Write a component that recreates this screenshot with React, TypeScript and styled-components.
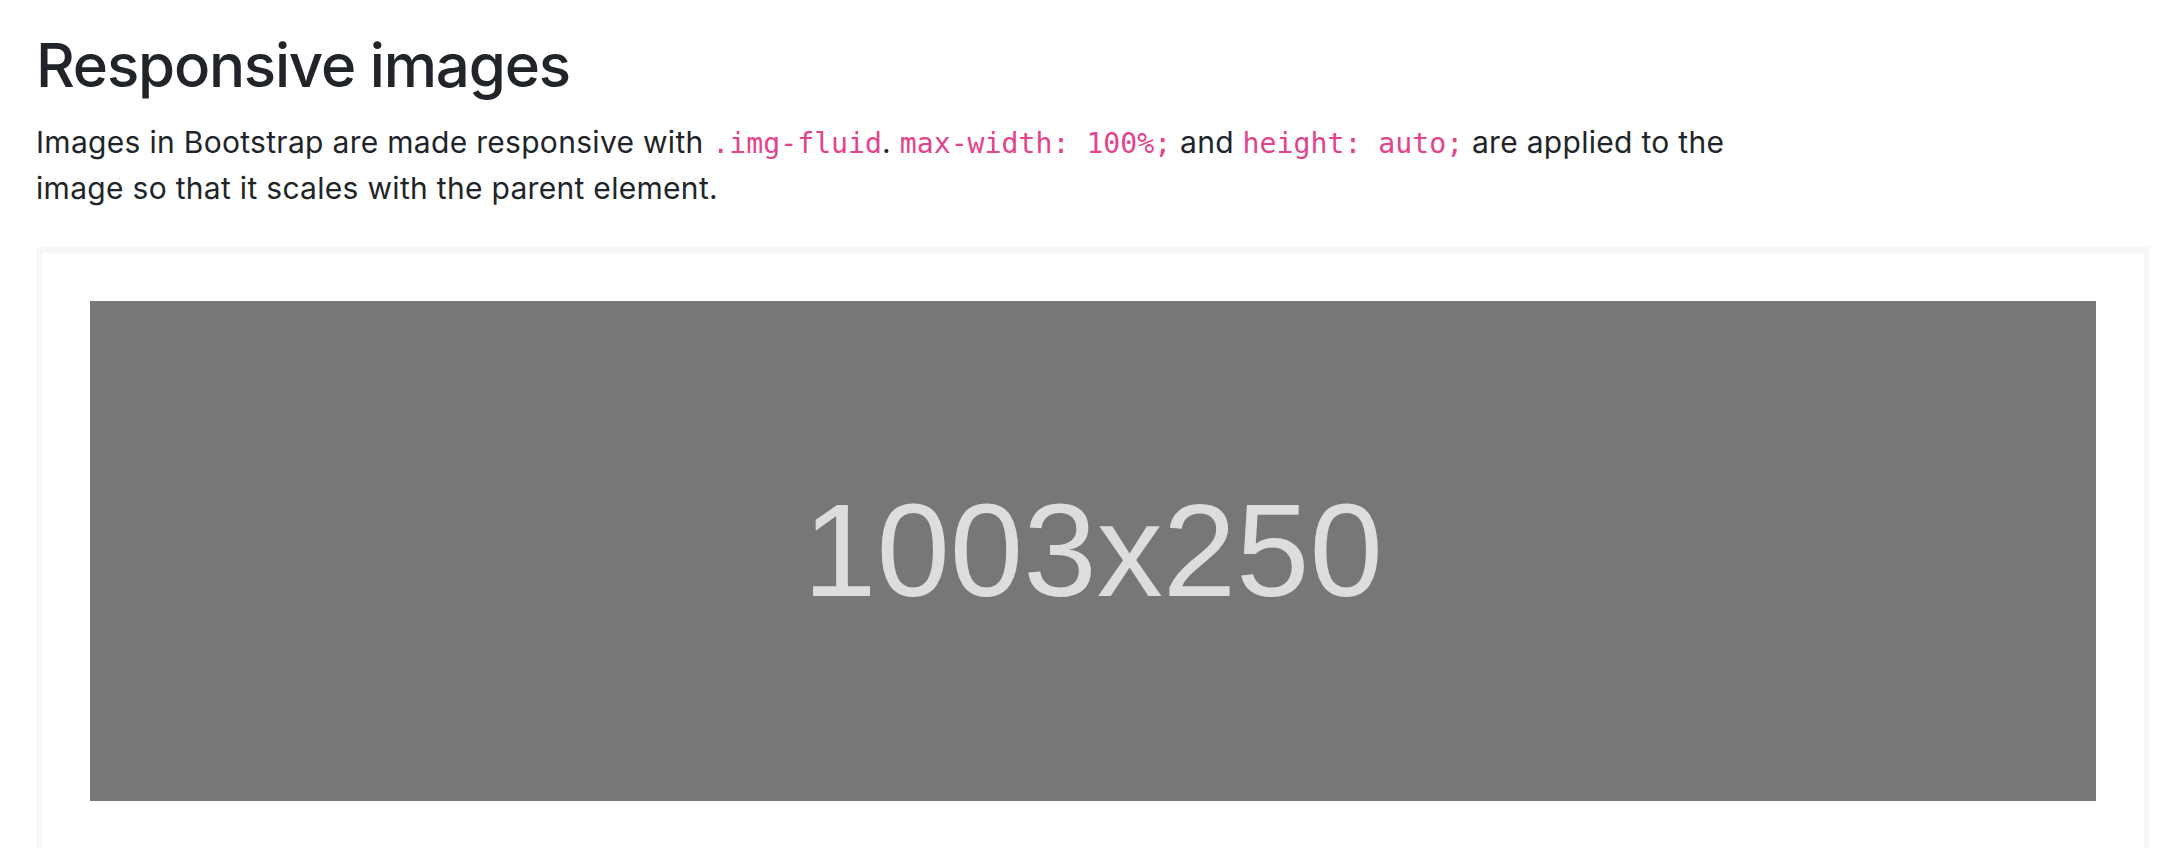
import React from "react";
import styled, { createGlobalStyle } from "styled-components";

const Global = createGlobalStyle`
  html, body {
    margin: 0;
    padding: 0;
    overflow: hidden;
    background: #ffffff;
  }
  body {
    font-family: Inter, "Noto Sans", sans-serif;
    color: #212529;
  }
`;

const Page = styled.main`
  padding: 29px 10px 0 36px;
  display: flex;
  flex-direction: column;
`;

const Title = styled.h2`
  margin: 0 0 19px 0;
  font-family: Inter, "Noto Sans", sans-serif;
  font-weight: 500;
  font-size: 60px;
  line-height: 72px;
  letter-spacing: -1.2px;
  color: #212529;
`;

const Lead = styled.p`
  margin: 0 0 36px 0;
  font-size: 30px;
  line-height: 45px;
  font-weight: 400;
  letter-spacing: 0.3px;
  color: #212529;
`;

const Code = styled.code`
  font-family: "DejaVu Sans Mono", "Liberation Mono", monospace;
  font-size: 28.2px;
  letter-spacing: 0;
  color: #e3438c;
`;

const Example = styled.section`
  border: 6px solid #f7f7f9;
  padding: 48px;
  display: flex;
`;

const Placeholder = styled.div`
  flex: 1;
  height: 500px;
  background: #777777;
  display: flex;
  align-items: center;
  justify-content: center;
  color: #dddddd;
  font-family: "Liberation Sans", Arial, sans-serif;
  font-size: 132px;
  line-height: 1;
`;

export default function App() {
  return (
    <>
      <Global />
      <Page>
        <Title>Responsive images</Title>
        <Lead>
          Images in Bootstrap are made responsive with <Code>.img-fluid</Code>.{" "}
          <Code>max-width: 100%;</Code> and <Code>height: auto;</Code> are applied to the
          <br />
          image so that it scales with the parent element.
        </Lead>
        <Example>
          <Placeholder>1003x250</Placeholder>
        </Example>
      </Page>
    </>
  );
}
